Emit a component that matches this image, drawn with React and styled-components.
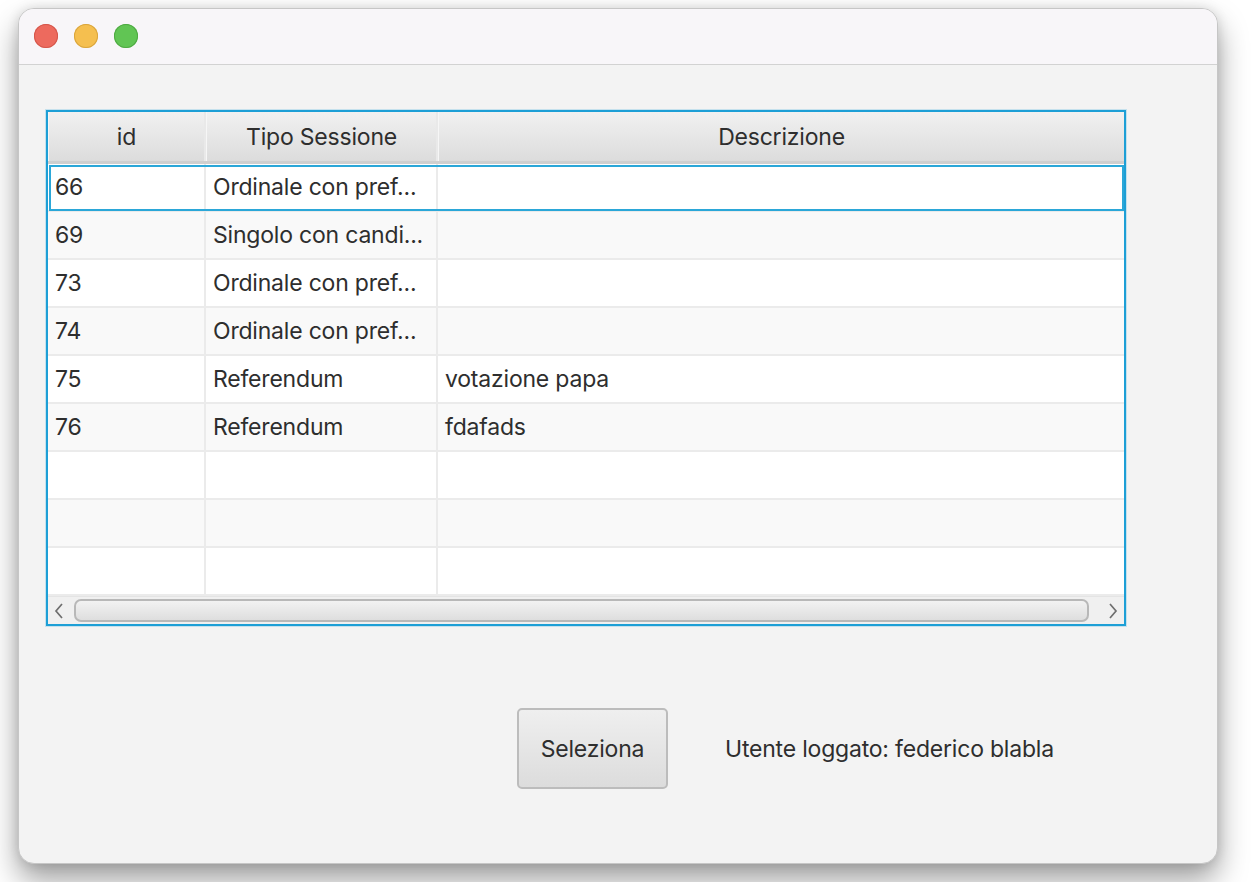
import styled, { createGlobalStyle } from "styled-components";

const GlobalStyle = createGlobalStyle`
  html, body {
    margin: 0;
    padding: 0;
    background: #ffffff;
  }
  body {
    font-family: Inter, "Noto Sans", "Liberation Sans", sans-serif;
    color: #2e2e2e;
  }
`;

const columns = [
  { key: "id", title: "id", width: 158 },
  { key: "tipo", title: "Tipo Sessione", width: 232 },
  { key: "descr", title: "Descrizione", width: 686 },
];

const rows = [
  { id: "66", tipo: "Ordinale con pref...", descr: "" },
  { id: "69", tipo: "Singolo con candi...", descr: "" },
  { id: "73", tipo: "Ordinale con pref...", descr: "" },
  { id: "74", tipo: "Ordinale con pref...", descr: "" },
  { id: "75", tipo: "Referendum", descr: "votazione papa" },
  { id: "76", tipo: "Referendum", descr: "fdafads" },
  { id: "", tipo: "", descr: "" },
  { id: "", tipo: "", descr: "" },
  { id: "", tipo: "", descr: "" },
];

const App = () => {
  return (
    <>
      <GlobalStyle />
      <Desktop>
        <Window>
          <TitleBar>
            <Light color="#ed6a5e" edge="#d4574c" />
            <Light color="#f5bf4f" edge="#d9a53e" />
            <Light color="#61c554" edge="#4fa943" />
          </TitleBar>
          <Content>
            <Table>
              <HeaderRow>
                {columns.map((c) => (
                  <HeaderCell key={c.key} width={c.width}>
                    {c.title}
                  </HeaderCell>
                ))}
              </HeaderRow>
              <Body>
                {rows.map((r, i) => (
                  <Row key={i} odd={i % 2 === 1} focused={i === 0}>
                    {columns.map((c) => (
                      <Cell key={c.key} width={c.width}>
                        {r[c.key]}
                      </Cell>
                    ))}
                  </Row>
                ))}
              </Body>
              <ScrollBar>
                <Arrow>
                  <svg width="12" height="18" viewBox="0 0 12 18">
                    <path d="M9 2 L3 9 L9 16" fill="none" stroke="#6e6e6e" strokeWidth="1.7" />
                  </svg>
                </Arrow>
                <Thumb />
                <Arrow>
                  <svg width="12" height="18" viewBox="0 0 12 18">
                    <path d="M3 2 L9 9 L3 16" fill="none" stroke="#6e6e6e" strokeWidth="1.7" />
                  </svg>
                </Arrow>
              </ScrollBar>
            </Table>
            <Footer>
              <Button>Seleziona</Button>
              <UserLabel>Utente loggato: federico blabla</UserLabel>
            </Footer>
          </Content>
        </Window>
      </Desktop>
    </>
  );
};

const Desktop = styled.div`
  width: 1252px;
  height: 882px;
  padding: 8px 0 0 18px;
  box-sizing: border-box;
  overflow: hidden;
`;

const Window = styled.div`
  width: 1200px;
  height: 856px;
  border-radius: 16px;
  overflow: hidden;
  border: 1px solid #c6c6c6;
  box-sizing: border-box;
  background: #f3f3f3;
  box-shadow: 0 16px 30px rgba(0, 0, 0, 0.38), 0 0 12px rgba(0, 0, 0, 0.12);
  display: flex;
  flex-direction: column;
`;

const TitleBar = styled.div`
  height: 56px;
  background: #f8f6f9;
  border-bottom: 1px solid #d2d2d2;
  display: flex;
  align-items: center;
  gap: 16px;
  padding: 0 0 1px 15px;
  box-sizing: border-box;
  flex-shrink: 0;
`;

const Light = styled.span`
  width: 24px;
  height: 24px;
  border-radius: 50%;
  background: ${(p) => p.color};
  box-shadow: inset 0 0 0 1px ${(p) => p.edge};
`;

const Content = styled.div`
  flex: 1;
  display: flex;
  flex-direction: column;
  padding: 45px 0 0 27px;
`;

const Table = styled.div`
  width: 1080px;
  height: 516px;
  box-sizing: border-box;
  border: 2px solid #1d9fd6;
  box-shadow: 0 0 0 1px rgba(60, 170, 220, 0.25);
  background: #ffffff;
  display: flex;
  flex-direction: column;
`;

const HeaderRow = styled.div`
  display: flex;
  height: 52px;
  flex-shrink: 0;
  border-bottom: 3px solid #cfcfcf;
  box-sizing: border-box;
  background: linear-gradient(#f1f1f1, #dcdcdc);
`;

const HeaderCell = styled.div`
  width: ${(p) => p.width}px;
  flex-shrink: 0;
  box-sizing: border-box;
  border-right: 2px solid #e9e9e9;
  border-left: 1px solid #f6f6f6;
  display: flex;
  align-items: center;
  justify-content: center;
  font-size: 23px;
  letter-spacing: -0.2px;
  color: #2e2e2e;
  &:last-child {
    flex: 1;
    border-right: none;
  }
`;

const Body = styled.div`
  display: flex;
  flex-direction: column;
  height: 432px;
  flex-shrink: 0;
`;

const Row = styled.div`
  position: relative;
  display: flex;
  height: 48px;
  box-sizing: border-box;
  border-bottom: 2px solid #ebebeb;
  background: ${(p) => (p.odd ? "#f9f9f9" : "#ffffff")};
  &::after {
    content: "";
    display: ${(p) => (p.focused ? "block" : "none")};
    position: absolute;
    left: 1px;
    right: 0;
    top: 1px;
    bottom: -1px;
    border: 2px solid #2ba7d8;
    pointer-events: none;
  }
`;

const Cell = styled.div`
  width: ${(p) => p.width}px;
  flex-shrink: 0;
  box-sizing: border-box;
  border-right: 2px solid #ebebeb;
  padding-left: 7px;
  display: flex;
  align-items: center;
  font-size: 23px;
  letter-spacing: -0.2px;
  color: #2e2e2e;
  white-space: nowrap;
  overflow: hidden;
  &:last-child {
    flex: 1;
    border-right: none;
  }
`;

const ScrollBar = styled.div`
  flex: 1;
  display: flex;
  align-items: center;
  background: #f0f0f0;
  border-top: 1px solid #e4e4e4;
`;

const Arrow = styled.div`
  width: 22px;
  display: flex;
  justify-content: center;
  align-items: center;
`;

const Thumb = styled.div`
  flex: 1;
  height: 23px;
  box-sizing: border-box;
  margin: 0 13px 0 4px;
  border: 2px solid #b8b8b8;
  border-radius: 7px;
  background: linear-gradient(#f2f2f2, #dedede);
`;

const Footer = styled.div`
  display: flex;
  align-items: center;
  margin-top: 82px;
  padding-left: 471px;
`;

const Button = styled.button`
  width: 151px;
  height: 81px;
  box-sizing: border-box;
  border: 2px solid #bcbcbc;
  border-radius: 5px;
  background: linear-gradient(#efefef, #dcdcdc);
  font-family: Inter, "Noto Sans", "Liberation Sans", sans-serif;
  font-size: 23px;
  letter-spacing: -0.2px;
  color: #2e2e2e;
  padding: 0;
  margin-right: 57px;
`;

const UserLabel = styled.span`
  font-size: 23px;
  letter-spacing: -0.2px;
  color: #2e2e2e;
`;

export default App;
